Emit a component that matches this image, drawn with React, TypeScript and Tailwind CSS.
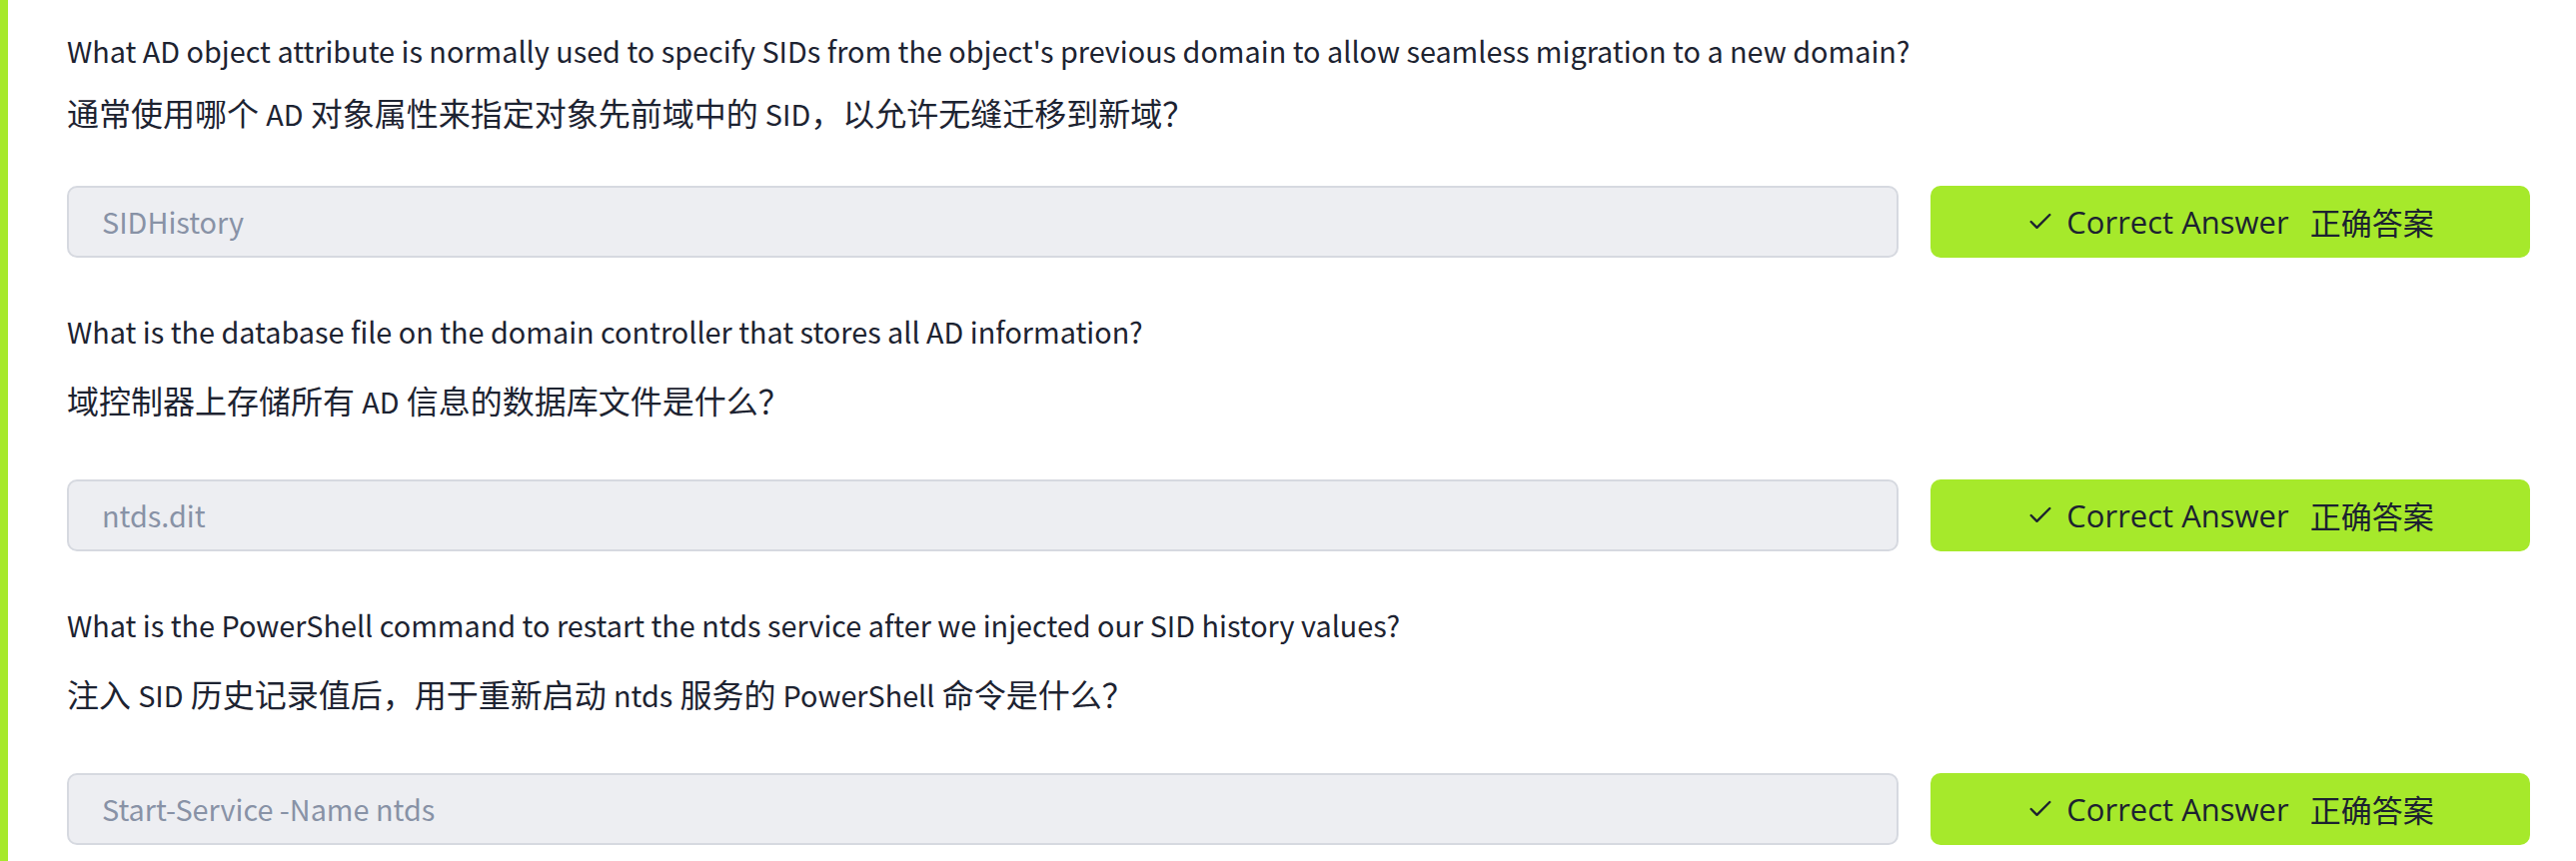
import React from 'react';
import { Check } from 'lucide-react';

type Question = {
  en: string;
  zh: string;
  answer: string;
};

const questions: Question[] = [
  {
    en: "What AD object attribute is normally used to specify SIDs from the object's previous domain to allow seamless migration to a new domain?",
    zh: '通常使用哪个 AD 对象属性来指定对象先前域中的 SID，以允许无缝迁移到新域？',
    answer: 'SIDHistory',
  },
  {
    en: 'What is the database file on the domain controller that stores all AD information?',
    zh: '域控制器上存储所有 AD 信息的数据库文件是什么？',
    answer: 'ntds.dit',
  },
  {
    en: 'What is the PowerShell command to restart the ntds service after we injected our SID history values?',
    zh: '注入 SID 历史记录值后，用于重新启动 ntds 服务的 PowerShell 命令是什么？',
    answer: 'Start-Service -Name ntds',
  },
];

// latin runs inside the chinese lines are set a bit smaller so they match the english lines
const MixedText: React.FC<{ text: string }> = ({ text }) => (
  <>
    {text.split(/([\x21-\x7e][\x20-\x7e]*[\x21-\x7e]|[\x21-\x7e])/).map((part, i) =>
      i % 2 === 1 ? (
        <span key={i} className="text-[28.8px]">
          {part}
        </span>
      ) : (
        <React.Fragment key={i}>{part}</React.Fragment>
      )
    )}
  </>
);

const AnswerRow: React.FC<{ answer: string }> = ({ answer }) => (
  <div className="flex gap-8">
    <div className="flex-1 h-[72px] rounded-[10px] border-2 border-[#d6d9e0] bg-[#edeef2] pl-[33px] flex items-center text-[28.8px] text-[#8892a6]">
      {answer}
    </div>
    <button className="w-[600px] h-[72px] rounded-[10px] bg-[#a6e92b] flex items-center justify-center text-[#1c2230] text-[31px] font-['Open_Sans','Noto_Sans_CJK_SC',sans-serif]">
      <Check size={28} strokeWidth={2} className="mr-3" />
      <span>Correct Answer</span>
      <span className="ml-[21px] font-['Noto_Sans_CJK_SC',sans-serif]">正确答案</span>
    </button>
  </div>
);

export default function App() {
  return (
    <div className="flex h-[862px] overflow-hidden bg-white font-['Noto_Sans_CJK_SC',sans-serif] text-[#1d2331]">
      <div className="w-2 shrink-0 bg-[#a6e92b]" />
      <div className="flex-1 pl-[59px] pr-[46px] pt-[27px]">
        {/* first question has its two lines set tighter */}
        <p className="h-12 text-[28.8px] leading-[48px]">{questions[0].en}</p>
        <p className="mt-[13px] h-12 text-[32px] leading-[48px]">
          <MixedText text={questions[0].zh} />
        </p>
        <div className="mt-[50px]">
          <AnswerRow answer={questions[0].answer} />
        </div>

        {questions.slice(1).map(q => (
          <div key={q.answer} className="mt-[50px]">
            <p className="h-12 text-[28.8px] leading-[48px]">{q.en}</p>
            <p className="mt-5 h-12 text-[32px] leading-[48px]">
              <MixedText text={q.zh} />
            </p>
            <div className="mt-14">
              <AnswerRow answer={q.answer} />
            </div>
          </div>
        ))}
      </div>
    </div>
  );
}
